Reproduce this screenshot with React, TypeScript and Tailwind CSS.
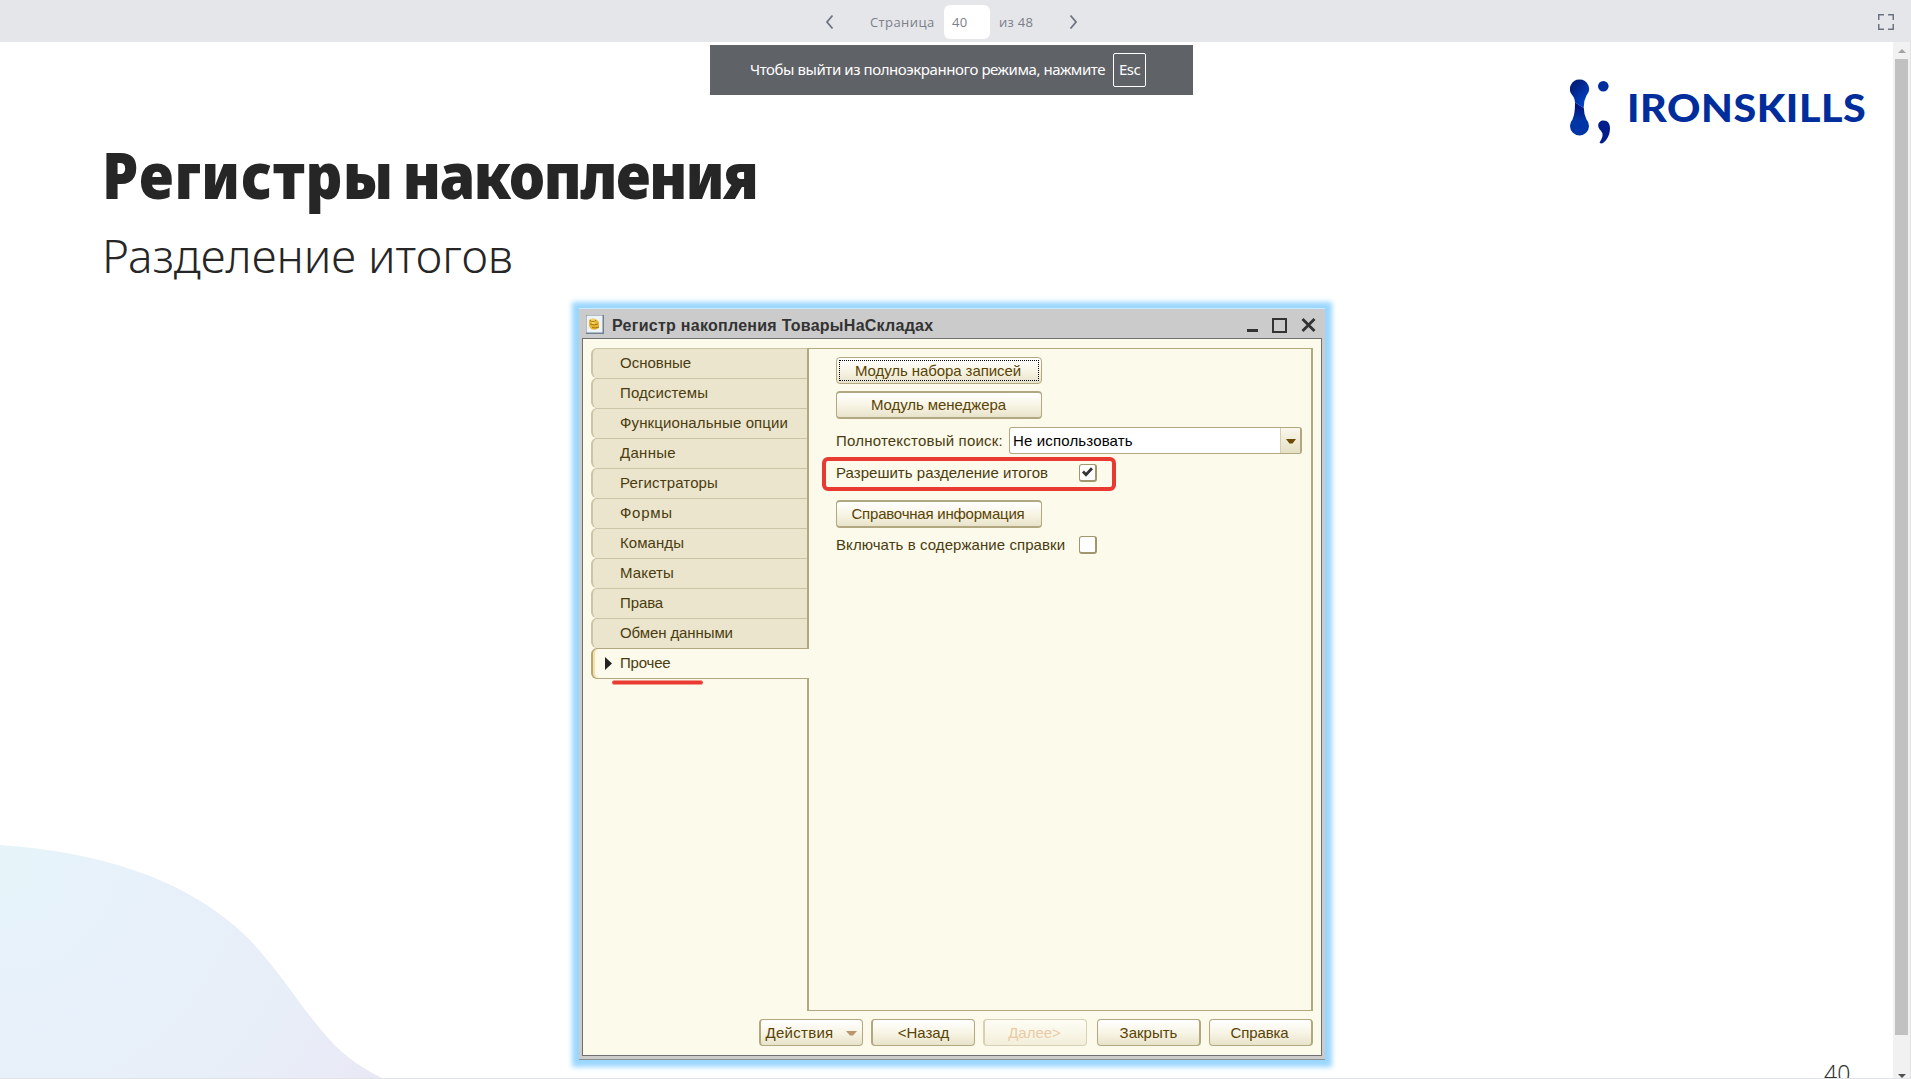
import type { ReactNode } from "react";

const tabs: { label: string; cls: string }[] = [
  { label: "Основные", cls: "" },
  { label: "Подсистемы", cls: "tracking-[0.1px]" },
  { label: "Функциональные опции", cls: "tracking-[0.12px]" },
  { label: "Данные", cls: "tracking-[0.3px]" },
  { label: "Регистраторы", cls: "tracking-[0.13px]" },
  { label: "Формы", cls: "tracking-[0.7px]" },
  { label: "Команды", cls: "tracking-[0.06px]" },
  { label: "Макеты", cls: "tracking-[0.13px]" },
  { label: "Права", cls: "tracking-[-0.1px]" },
  { label: "Обмен данными", cls: "tracking-[-0.1px]" },
];

function FormButton({ children, className = "" }: { children: ReactNode; className?: string }) {
  return (
    <button
      className={
        "flex items-center justify-center rounded-[4px] border border-[#b1a882] bg-linear-to-b from-white via-[#f8f5e6] to-[#e8e3ca] text-[#594304] " +
        className
      }
    >
      {children}
    </button>
  );
}

function Checkbox({ checked = false }: { checked?: boolean }) {
  return (
    <span className="flex h-[18px] w-[18px] shrink-0 items-center justify-center rounded-[3px] border border-r-2 border-b-2 border-[#a1976d] bg-white">
      {checked && (
        <svg width="11" height="10" viewBox="0 0 11 10" fill="none">
          <path d="M1 4.5 L4 7.6 L10 1.2" stroke="#333" strokeWidth="2.8" />
        </svg>
      )}
    </span>
  );
}

function Toolbar() {
  return (
    <header className="flex h-[42px] shrink-0 items-center bg-[#e5e6ea] font-['Open_Sans',sans-serif] text-[13px] text-[#7b8089]">
      <div className="ml-[825px] flex items-center">
        <svg width="9" height="16" viewBox="0 0 9 16" fill="none" className="mt-[2px]">
          <path d="M7.5 1.5 L2 8 L7.5 14.5" stroke="#6b7280" strokeWidth="1.8" />
        </svg>
        <span className="ml-9 w-[74px] pt-[3px] tracking-[0.4px]">Страница</span>
        <span className="mt-[2px] flex h-[34px] w-[46px] items-center rounded-md bg-white pt-[1px] pl-2 tracking-[0.3px]">40</span>
        <span className="ml-[9px] w-[69px] pt-[3px] tracking-[0.3px]">из 48</span>
        <svg width="9" height="16" viewBox="0 0 9 16" fill="none" className="mt-[2px] ml-[1px]">
          <path d="M1.5 1.5 L7 8 L1.5 14.5" stroke="#6b7280" strokeWidth="1.8" />
        </svg>
      </div>
      <svg className="mt-[2px] mr-[17px] ml-auto" width="16" height="16" viewBox="0 0 16 16" fill="none">
        <path d="M.75 6V.75H6M10 .75h5.25V6M15.25 10v5.25H10M6 15.25H.75V10" stroke="#6b7280" strokeWidth="1.5" />
      </svg>
    </header>
  );
}

function Logo() {
  return (
    <div className="flex h-[58px] items-start">
      <svg width="44" height="66" viewBox="0 0 44 66">
        <defs>
          <linearGradient id="top" x1="0" y1="0" x2="0.7" y2="1">
            <stop offset="0.25" stopColor="#00207e" />
            <stop offset="1" stopColor="#0046cf" />
          </linearGradient>
          <linearGradient id="bottom" x1="0.3" y1="0" x2="0.3" y2="1">
            <stop offset="0" stopColor="#000b74" />
            <stop offset="0.55" stopColor="#0035a6" />
          </linearGradient>
        </defs>
        <path
          d="M9.500 0.500 A9.500 9.500 0 0 1 16.500 16.500 Q13.500 22 13.800 29 L5 23.500 Q4.500 18.500 2.500 16.500 A9.500 9.500 0 0 1 9.500 0.500Z"
          fill="url(#top)"
        />
        <path
          d="M5 23.500 L13.800 29 Q14 36 16.500 40.500 A9.500 9.500 0 1 1 2.500 40.500 Q5.200 34 5 23.500Z"
          fill="url(#bottom)"
        />
        <circle cx="33.300" cy="7.300" r="5.300" fill="#002d9c" />
        <path
          d="M33.500 41.500 C38 41.500 40 45 40 49 C40 56 37 61 33 64 Q31 65 29.500 63.500 Q33 58.500 32.500 54.500 C31.500 51.500 28.200 50 28.200 46.500 C28.200 43.500 30.500 41.500 33.500 41.500Z"
          fill="#001d8c"
        />
      </svg>
      <span className="mt-[10px] ml-[13px] origin-left scale-x-[1.1] font-['Lato',sans-serif] text-[37.500px] leading-[37px] font-black tracking-[0.5px] text-[#002d9c]">
        IRONSKILLS
      </span>
    </div>
  );
}

function FullscreenHint() {
  return (
    <div className="absolute top-[3px] left-[710px] flex h-[50px] w-[483px] items-center bg-[#5f6267] pl-10 font-['Noto_Sans',sans-serif] text-[15px] text-white">
      <span className="w-[363px] pb-[2px] tracking-[-0.43px] whitespace-nowrap">
        Чтобы выйти из полноэкранного режима, нажмите
      </span>
      <span className="flex h-[34px] w-[33px] items-center justify-center rounded-[2px] border border-white pb-[2px] tracking-[-0.5px]">
        Esc
      </span>
    </div>
  );
}

function RegisterWindow() {
  return (
    <section className="ml-[579px] flex h-[751px] w-[746px] flex-col border-b border-[#8f8f8f] bg-[#cbcbcb] font-['Liberation_Sans',Arial,sans-serif] text-[15px] whitespace-nowrap text-[#4a3c10] shadow-[0_-1px_0_0_#c9eaff,0_0_5px_7px_#9ad7ff]">
      <div className="flex h-[29px] shrink-0 items-center pr-[9px] pl-[7px]">
        <svg width="18" height="19" viewBox="0 0 18 19" className="mt-px shrink-0">
          <rect width="18" height="19" fill="#6f8093" />
          <rect x="0.5" y="0.5" width="16" height="17" fill="#edf3f7" />
          <path d="M3 5q4-3 8 0l2 2v6q-4 3-8 1l-2-3Z" fill="#e8b72d" />
          <path d="M4 5.500q3 2 6 0M4 9q4 2 8 0M6 12.500q3 1 7-.5" stroke="#a87510" fill="none" />
          <path d="M5 5h4M6 8h3" stroke="#fff1a0" fill="none" />
        </svg>
        <span className="mt-[5px] ml-[8px] text-[16px] leading-[18px] font-bold tracking-[0.27px] text-[#333]">
          Регистр накопления ТоварыНаСкладах
        </span>
        <div className="mt-[4px] ml-auto flex items-end gap-[14px]">
          <span className="mb-px h-[3px] w-[11px] bg-[#333]" />
          <span className="h-[15px] w-[15px] border-2 border-[#333]" />
          <svg width="15" height="14" viewBox="0 0 15 14" className="mb-px">
            <path d="M1.500 1 L13.500 13 M13.500 1 L1.500 13" stroke="#333" strokeWidth="2.800" />
          </svg>
        </div>
      </div>

      <div className="mx-[3px] h-[718px] border border-[#707070] bg-[#fcfaeb]">
        <div className="mx-2 mt-[9px] flex h-[663px]">
          <nav className="z-10 w-[216px] shrink-0">
            {tabs.map((tab) => (
              <div
                key={tab.label}
                className={
                  "h-[30px] rounded-l-[6px] border-t border-l-2 border-[#cbc4a6] bg-[#eae5cc] pl-[27px] leading-[27px] " + tab.cls
                }
              >
                {tab.label}
              </div>
            ))}
            <div className="-mr-[2px] flex h-[31px] items-center rounded-l-[6px] border-y border-l-2 border-[#b1a882] bg-[#fcfaeb] pb-px tracking-[-0.2px] shadow-[inset_2px_0_0_#fbdf9f]">
              <svg width="7" height="13" viewBox="0 0 7 13" className="mr-2 ml-3">
                <path d="M0 0 L7 6.500 L0 13Z" fill="#222" />
              </svg>
              Прочее
            </div>
            <div className="mt-[1px] ml-[21px] h-[5px] w-[91px] rounded-sm border-y border-[#f3998c] bg-[#e83a30]" />
          </nav>

          <div className="flex flex-1 flex-col items-start border-x-2 border-y border-[#b1a882] pt-2 pl-[27px]">
            <FormButton className="h-[27px] w-[206px] p-[2px]">
              <span className="flex h-full w-full items-center justify-center border border-dotted border-black pt-px pr-[2px] tracking-[-0.08px]">
                Модуль набора записей
              </span>
            </FormButton>
            <FormButton className="mt-[7px] h-7 w-[206px] border-y-2 pr-px tracking-[-0.07px]">Модуль менеджера</FormButton>

            <div className="mt-2 flex h-[27px] items-center">
              <span className="w-[173px] pt-px tracking-[0.21px]">Полнотекстовый поиск:</span>
              <div className="flex h-[27px] w-[293px] items-center overflow-hidden rounded-[3px] border border-r-2 border-[#b1a882] bg-white pl-[3px] tracking-[0.15px] text-black">
                <span className="pt-px">Не использовать</span>
                <span className="ml-auto flex h-full w-[20px] items-center justify-center border-l border-[#d5ceb2] bg-linear-to-b from-[#f9f7ec] to-[#e6e0c4]">
                  <svg width="10" height="5" viewBox="0 0 10 5" className="mt-px">
                    <path d="M0 0H10L6.500 4.500H3.500Z" fill="#6b4c00" />
                  </svg>
                </span>
              </div>
            </div>

            <div className="mt-[3px] -ml-[14px] flex h-[34px] w-[294px] items-center rounded-[6px] border-4 border-[#e83a30] pb-[3px] pl-[10px]">
              <span className="w-[243px] pt-[2px] tracking-[0.03px]">Разрешить разделение итогов</span>
              <Checkbox checked />
            </div>

            <FormButton className="mt-[9px] h-7 w-[206px] border-y-2 pr-[2px] tracking-[-0.22px]">Справочная информация</FormButton>

            <div className="mt-[6px] flex items-center">
              <span className="w-[243px] tracking-[0.07px]">Включать в содержание справки</span>
              <Checkbox />
            </div>
          </div>
        </div>

        <div className="mt-2 mr-2 flex h-[27px] justify-end">
          <FormButton className="w-[104px] gap-[13px] border-l-2 pt-px tracking-[0.28px]">
            Действия
            <svg width="11" height="5" viewBox="0 0 11 5">
              <path d="M0 0H11L7 4.500H4Z" fill="#b9966b" />
            </svg>
          </FormButton>
          <FormButton className="ml-2 w-[104px] border-l-2 pt-px">&lt;Назад</FormButton>
          <FormButton className="ml-2 w-[104px] border-l-2 pt-px opacity-50">
            <span className="pr-[2px] text-[#d99a60]">Далее&gt;</span>
          </FormButton>
          <FormButton className="ml-[10px] w-[104px] border-r-2 pt-px">Закрыть</FormButton>
          <FormButton className="ml-2 w-[104px] border-r-2 pt-px pr-[2px] tracking-[-0.1px]">Справка</FormButton>
        </div>
      </div>
    </section>
  );
}

export default function App() {
  return (
    <div className="flex h-[1079px] w-[1911px] flex-col overflow-hidden bg-white">
      <Toolbar />
      <div className="flex h-[1037px] border-r border-b border-[#e2e3e7]">
        <main className="relative h-[1036px] w-[1893px] shrink-0 overflow-hidden">
          <svg className="absolute bottom-0 left-0" width="384" height="234" viewBox="0 0 384 234">
            <defs>
              <radialGradient id="wave" gradientUnits="userSpaceOnUse" cx="0" cy="10" r="430">
                <stop offset="0" stopColor="#e6f4f9" />
                <stop offset="0.3" stopColor="#e7f1fa" />
                <stop offset="0.75" stopColor="#e8eef8" />
                <stop offset="1" stopColor="#e9e9f6" />
              </radialGradient>
            </defs>
            <path
              d="M0 1 Q72 6 127 24 C175 39 216 63 247 93 C280 127 297 158 323 188 Q345 216 382 234 H0Z"
              fill="url(#wave)"
            />
          </svg>

          <div className="relative flex h-[267px] justify-between pr-[25px] pl-[102px]">
            <div className="pt-[101px] text-[#262626]">
              <h1 className="flex origin-left scale-x-90 gap-[10px] font-['Noto_Sans',sans-serif] text-[64px] leading-[64px] font-black whitespace-nowrap">
                <span className="tracking-[0.9px]">Регистры</span>
                <span className="tracking-[-1.65px]">накопления</span>
              </h1>
              <p className="mt-[25px] font-['Noto_Sans',sans-serif] text-[46px] leading-[46px] font-light">
                Разделение итогов
              </p>
            </div>
            <div className="w-[298px] pt-[37px]">
              <Logo />
            </div>
          </div>

          <div className="relative">
            <RegisterWindow />
          </div>

          <span className="absolute top-[1017px] left-[1824px] font-['Noto_Sans',sans-serif] text-[23px] leading-[28px] font-light text-[#333]">
            40
          </span>
          <FullscreenHint />
        </main>

        <aside className="flex w-[17px] shrink-0 flex-col items-center bg-[#f1f1f1]">
          <svg width="8" height="4" viewBox="0 0 8 4" className="mt-[7px]">
            <path d="M4 0 L8 4 H0Z" fill="#a3a3a3" />
          </svg>
          <div className="mt-[6px] h-[976px] w-[13px] bg-[#c1c1c1]" />
          <svg width="8" height="4" viewBox="0 0 8 4" className="mt-[39px]">
            <path d="M0 0 H8 L4 4Z" fill="#505050" />
          </svg>
        </aside>
      </div>
    </div>
  );
}
